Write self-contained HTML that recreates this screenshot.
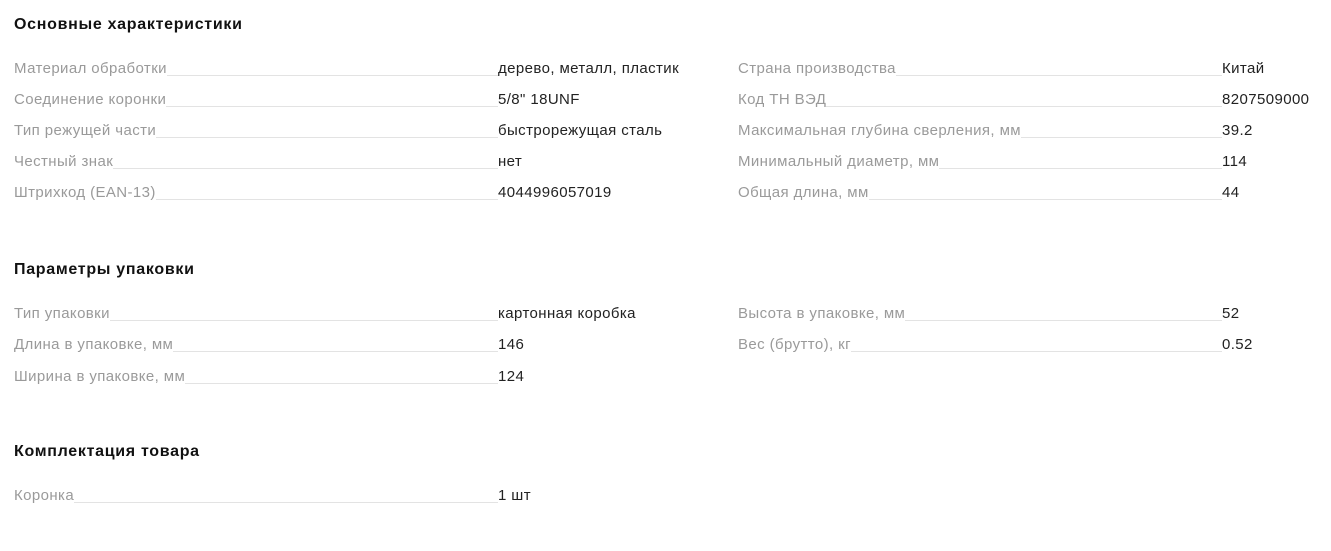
<!DOCTYPE html>
<html><head><meta charset="utf-8"><style>
body{margin:0;background:#fff;font-family:"Liberation Sans",sans-serif;color:#222;}
h2{position:absolute;left:14px;margin:0;font-size:16px;letter-spacing:0.7px;font-weight:bold;color:#111;line-height:20px;}
.r{position:absolute;height:20px;display:flex;align-items:flex-end;font-size:15px;letter-spacing:0.4px;line-height:18px;}
.l{color:#9a9a9a;white-space:nowrap;position:relative;top:1px;}
.d{flex:1;border-bottom:1px solid #e3e3e3;margin-bottom:1px;height:1px;}
.v{position:absolute;white-space:nowrap;color:#222;bottom:-1px;}
</style></head><body>
<h2 style="top:15px">Основные характеристики</h2>
<h2 style="top:260px">Параметры упаковки</h2>
<h2 style="top:442px">Комплектация товара</h2>
<div class="r" style="left:14px;width:484px;top:57px"><span class="l">Материал обработки</span><span class="d"></span><span class="v" style="left:484px">дерево, металл, пластик</span></div>
<div class="r" style="left:14px;width:484px;top:88px"><span class="l">Соединение коронки</span><span class="d"></span><span class="v" style="left:484px">5/8" 18UNF</span></div>
<div class="r" style="left:14px;width:484px;top:119px"><span class="l">Тип режущей части</span><span class="d"></span><span class="v" style="left:484px">быстрорежущая сталь</span></div>
<div class="r" style="left:14px;width:484px;top:150px"><span class="l">Честный знак</span><span class="d"></span><span class="v" style="left:484px">нет</span></div>
<div class="r" style="left:14px;width:484px;top:181px"><span class="l">Штрихкод (EAN-13)</span><span class="d"></span><span class="v" style="left:484px">4044996057019</span></div>
<div class="r" style="left:738px;width:484px;top:57px"><span class="l">Страна производства</span><span class="d"></span><span class="v" style="left:484px">Китай</span></div>
<div class="r" style="left:738px;width:484px;top:88px"><span class="l">Код ТН ВЭД</span><span class="d"></span><span class="v" style="left:484px">8207509000</span></div>
<div class="r" style="left:738px;width:484px;top:119px"><span class="l">Максимальная глубина сверления, мм</span><span class="d"></span><span class="v" style="left:484px">39.2</span></div>
<div class="r" style="left:738px;width:484px;top:150px"><span class="l">Минимальный диаметр, мм</span><span class="d"></span><span class="v" style="left:484px">114</span></div>
<div class="r" style="left:738px;width:484px;top:181px"><span class="l">Общая длина, мм</span><span class="d"></span><span class="v" style="left:484px">44</span></div>
<div class="r" style="left:14px;width:484px;top:302px"><span class="l">Тип упаковки</span><span class="d"></span><span class="v" style="left:484px">картонная коробка</span></div>
<div class="r" style="left:14px;width:484px;top:333px"><span class="l">Длина в упаковке, мм</span><span class="d"></span><span class="v" style="left:484px">146</span></div>
<div class="r" style="left:14px;width:484px;top:365px"><span class="l">Ширина в упаковке, мм</span><span class="d"></span><span class="v" style="left:484px">124</span></div>
<div class="r" style="left:738px;width:484px;top:302px"><span class="l">Высота в упаковке, мм</span><span class="d"></span><span class="v" style="left:484px">52</span></div>
<div class="r" style="left:738px;width:484px;top:333px"><span class="l">Вес (брутто), кг</span><span class="d"></span><span class="v" style="left:484px">0.52</span></div>
<div class="r" style="left:14px;width:484px;top:484px"><span class="l">Коронка</span><span class="d"></span><span class="v" style="left:484px">1 шт</span></div>
</body></html>
